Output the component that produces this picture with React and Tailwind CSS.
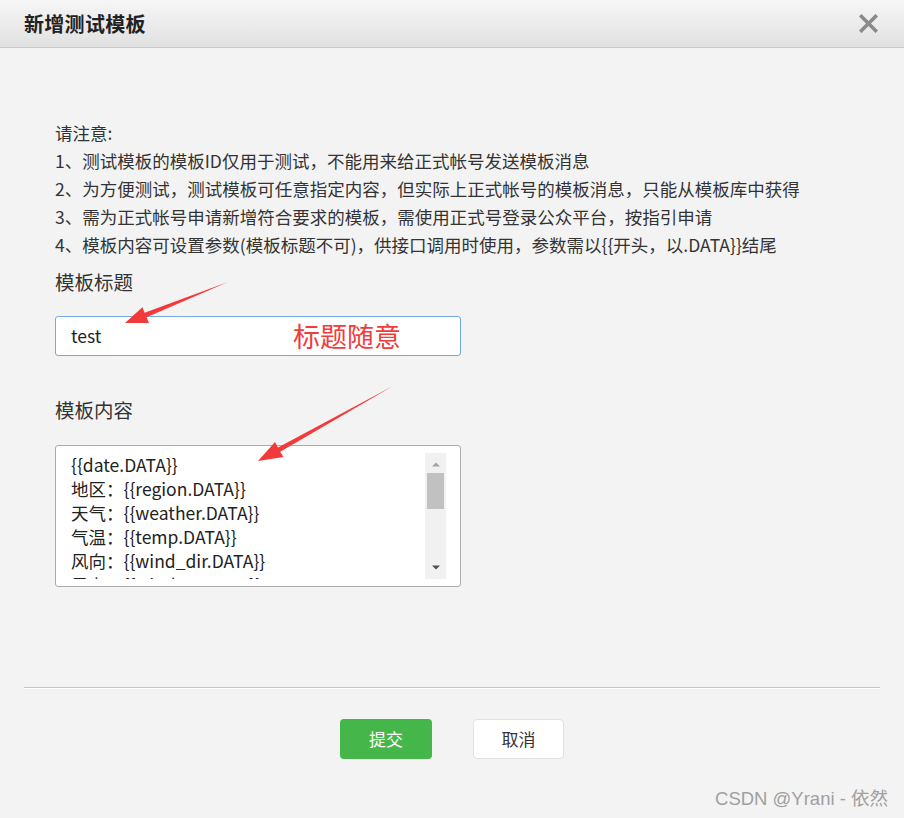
import React from 'react';

const notes = [
    '请注意:',
    '1、测试模板的模板ID仅用于测试，不能用来给正式帐号发送模板消息',
    '2、为方便测试，测试模板可任意指定内容，但实际上正式帐号的模板消息，只能从模板库中获得',
    '3、需为正式帐号申请新增符合要求的模板，需使用正式号登录公众平台，按指引申请',
    '4、模板内容可设置参数(模板标题不可)，供接口调用时使用，参数需以{{开头，以.DATA}}结尾',
];

const contentLines = [
    '{{date.DATA}}',
    '地区：{{region.DATA}}',
    '天气：{{weather.DATA}}',
    '气温：{{temp.DATA}}',
    '风向：{{wind_dir.DATA}}',
    '风力：{{wind_sc.DATA}}',
];

const font = { fontFamily: '"Noto Sans CJK SC", "Noto Sans", sans-serif' };

const App = () => {
    return (
        <div className="relative w-[904px] h-[818px] bg-[#f3f3f3] overflow-hidden text-[#333]" style={font}>
            {/* header */}
            <div className="h-12 flex items-center justify-between pl-6 pr-[26px] bg-gradient-to-b from-[#f6f6f6] to-[#e1e1e1] border-b border-[#c9c9c9]">
                <h1 className="text-[20px] font-bold text-[#222] leading-none tracking-[0.3px]">新增测试模板</h1>
                <svg width="19" height="19" viewBox="0 0 19 19">
                    <path d="M2.5 2.5 L16.5 16.5 M16.5 2.5 L2.5 16.5" stroke="#8a8a8a" strokeWidth="3.6" strokeLinecap="square" />
                </svg>
            </div>

            {/* body */}
            <div className="px-[55px] pt-[71px]">
                <div className="text-[17.5px] leading-[28px] text-[#333]">
                    {notes.map((n, i) => (
                        <div key={i} className="whitespace-nowrap">{n}</div>
                    ))}
                </div>

                <div className="mt-[9px] text-[19.5px] leading-[28px] text-[#333]">模板标题</div>
                <div className="mt-5 w-[406px] h-10 bg-white border border-[#72abe3] rounded-[3px] flex items-center pl-[15px]">
                    <span className="text-[17.5px] text-[#222]">test</span>
                </div>

                <div className="mt-10 text-[19.5px] leading-[28px] text-[#333]">模板内容</div>
                <div className="mt-[21px] w-[406px] h-[142px] bg-white border border-[#aaaaaa] rounded-[3px] flex overflow-hidden">
                    <div className="flex-1 h-[133px] pl-[15px] pt-[7px] text-[17.5px] leading-[24px] text-[#222] overflow-hidden">
                        {contentLines.map((l, i) => (
                            <div key={i} className="whitespace-nowrap">{l}</div>
                        ))}
                    </div>
                    <div className="w-[21px] mt-[7px] mb-[7px] mr-[14px] bg-[#f1f1f1] flex flex-col items-center">
                        <svg width="10" height="6" viewBox="0 0 10 6" className="mt-[8px]">
                            <path d="M1 5.5 L5 1.5 L9 5.5 Z" fill="#a3a3a3" />
                        </svg>
                        <div className="mt-[6px] w-[17px] h-9 bg-[#c1c1c1]" />
                        <div className="flex-1" />
                        <svg width="10" height="6" viewBox="0 0 10 6" className="mb-[8px]">
                            <path d="M1 0.5 L9 0.5 L5 4.5 Z" fill="#505050" />
                        </svg>
                    </div>
                </div>
            </div>

            {/* footer */}
            <div className="mx-6 mt-[100px] border-t border-[#c4c4c4] border-b border-b-white" />
            <div className="mt-[30px] flex justify-center gap-[41px]">
                <button className="w-[92px] h-10 rounded-[4px] bg-[#45b649] text-white text-[17px]">提交</button>
                <button className="w-[91px] h-10 rounded-[4px] bg-white border border-[#e1e1e6] text-[#333] text-[17px]">取消</button>
            </div>

            {/* annotations */}
            <span className="absolute left-[293px] top-[318px] text-[27px] leading-[36px] text-[#f23c3c]">标题随意</span>
            <svg className="absolute left-0 top-0 pointer-events-none" width="904" height="818" viewBox="0 0 904 818">
                <polygon points="228,282 146.6,317.2 149,323 125,323 142.4,307.2 144.6,312.8" fill="#f33a3a" />
                <polygon points="393,386 280.2,451.8 283.5,457 258,461 275,442 278,447.5" fill="#f33a3a" />
            </svg>

            {/* watermark */}
            <div className="absolute right-[16px] bottom-[8px] text-[18.5px] text-[#a0a0a0] leading-[22px]" style={{ fontFamily: '"Liberation Sans", "Noto Sans CJK SC", sans-serif' }}>
                CSDN @Yrani - 依然
            </div>
        </div>
    );
};

export default App;
